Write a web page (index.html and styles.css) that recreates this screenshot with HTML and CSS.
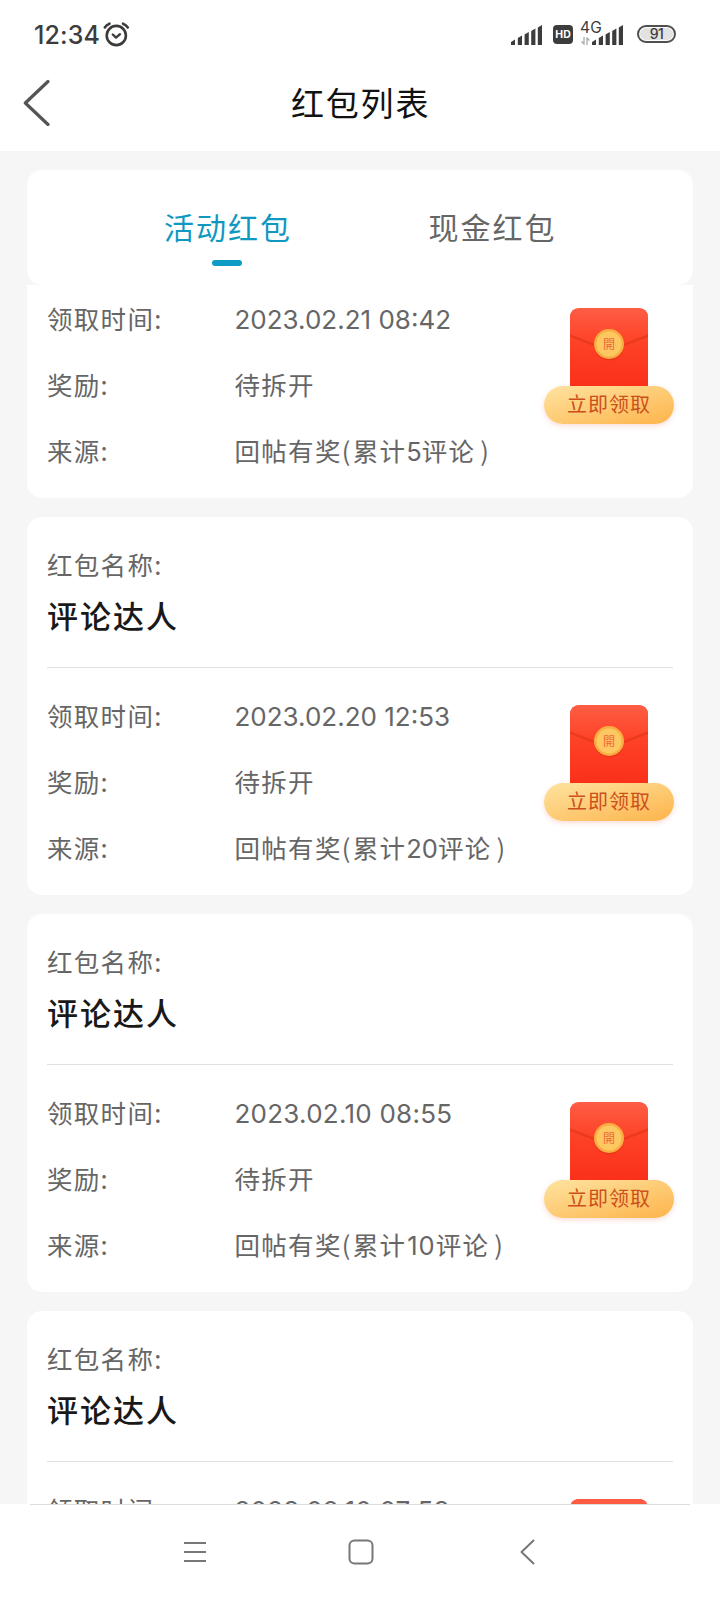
FILE: index.html
```html
<!DOCTYPE html>
<html lang="zh-CN">
<head>
<meta charset="utf-8">
<title>红包列表</title>
<link rel="stylesheet" href="styles.css">
</head>
<body>
<svg width="0" height="0" class="defs">
  <defs>
    <linearGradient id="red" x1="0" y1="0" x2="0" y2="1"><stop offset="0" stop-color="#ff6145"/><stop offset=".35" stop-color="#fe4529"/><stop offset="1" stop-color="#fb301a"/></linearGradient>
    <linearGradient id="flap" x1="0" y1="0" x2="0" y2="1"><stop offset="0" stop-color="#fd5d45"/><stop offset="1" stop-color="#fe4024"/></linearGradient>
    <symbol id="envelope" viewBox="0 0 78 78">
      <path d="M0 78V10Q0 0 10 0H68Q78 0 78 10V78Z" fill="url(#red)"/>
      <path d="M0 26L24 35.500Q39 40 54 35.500L78 26V29L54 38Q39 43 24 38L0 29Z" fill="#cf2c14" opacity=".4"/>
      <path d="M0 26V10Q0 0 10 0H68Q78 0 78 10V26L54 35.500Q39 40 24 35.500Z" fill="url(#flap)"/>
      <circle cx="39" cy="37.500" r="15" fill="#d42f12" opacity=".45"/>
      <circle cx="39" cy="36" r="15" fill="#f9ae43"/>
      <circle cx="39" cy="36" r="12.500" fill="#fdc862"/>
    </symbol>
    <symbol id="signal" viewBox="0 0 31 20">
      <path d="M0 20V17L4 14.500V20ZM6.800 20V13L11 10.500V20ZM13.600 20V9.500L17.800 7V20ZM20.200 20V6L24.400 3.500V20ZM26.800 20V2.500L31 0V20Z" fill="#3c3c3c"/>
    </symbol>
  </defs>
</svg>
<div class="phone">
  <div class="status">
    <span class="clock">12:34</span>
    <svg class="alarm" width="27" height="25" viewBox="0 0 27 25" fill="none" stroke="#3c3c3c" stroke-linecap="round"><circle cx="13.300" cy="13.500" r="9.600" stroke-width="2.600"/><path d="M1.800 5.500Q3.500 2.700 6.500 1.700M20 1.700Q23 2.700 24.800 5.500" stroke-width="2.600"/><path d="M9.800 12.500L13 15.600L17 12.200" stroke-width="2.400" stroke-linejoin="round"/></svg>
    <svg class="sim1" width="31" height="20"><use href="#signal"/></svg>
    <span class="hd">HD</span>
    <div class="sim2">
      <span class="net">4G</span>
      <svg class="arrows" width="9" height="8" viewBox="0 0 9 8" fill="none" stroke="#aaa" stroke-width="1.300"><path d="M3 0V7L.5 4.500M6 8V1L8.500 3.500"/></svg>
      <svg class="bars" width="31" height="20"><use href="#signal"/></svg>
    </div>
    <span class="battery">91</span>
  </div>
  <header class="header">
    <svg class="back" width="28" height="48" viewBox="0 0 28 48" fill="none" stroke="#555" stroke-width="3.200" stroke-linecap="round" stroke-linejoin="round"><path d="M25 3.500L2.300 25L25 46.500"/></svg>
    <h1 class="title">红包列表</h1>
  </header>
  <nav class="tabs">
    <div class="tab active">活动红包</div>
    <div class="tab">现金红包</div>
  </nav>
  <main class="list">
    <section class="card card-first">
      <div class="details">
        <div class="rows">
          <div class="row"><span class="label">领取时间:</span><span class="num">2023.02.21 08:42</span></div>
          <div class="row"><span class="label">奖励:</span><span>待拆开</span></div>
          <div class="row"><span class="label">来源:</span><span>回帖有奖<i class="lp">(</i>累计<i class="n">5</i>评论<i class="rp">)</i></span></div>
        </div>
        <div class="claim"><div class="packet"><svg width="78" height="78"><use href="#envelope"/></svg><span class="seal">開</span></div><span class="btn">立即领取</span></div>
      </div>
    </section>
    <section class="card">
      <div class="name">红包名称:</div>
      <h2 class="heading">评论达人</h2>
      <div class="details ruled">
        <div class="rows">
          <div class="row"><span class="label">领取时间:</span><span class="num">2023.02.20 12:53</span></div>
          <div class="row"><span class="label">奖励:</span><span>待拆开</span></div>
          <div class="row"><span class="label">来源:</span><span>回帖有奖<i class="lp">(</i>累计<i class="n">20</i>评论<i class="rp">)</i></span></div>
        </div>
        <div class="claim"><div class="packet"><svg width="78" height="78"><use href="#envelope"/></svg><span class="seal">開</span></div><span class="btn">立即领取</span></div>
      </div>
    </section>
    <section class="card">
      <div class="name">红包名称:</div>
      <h2 class="heading">评论达人</h2>
      <div class="details ruled">
        <div class="rows">
          <div class="row"><span class="label">领取时间:</span><span class="num wide">2023.02.10 08:55</span></div>
          <div class="row"><span class="label">奖励:</span><span>待拆开</span></div>
          <div class="row"><span class="label">来源:</span><span>回帖有奖<i class="lp">(</i>累计<i class="n wide">10</i>评论<i class="rp">)</i></span></div>
        </div>
        <div class="claim"><div class="packet"><svg width="78" height="78"><use href="#envelope"/></svg><span class="seal">開</span></div><span class="btn">立即领取</span></div>
      </div>
    </section>
    <section class="card">
      <div class="name">红包名称:</div>
      <h2 class="heading">评论达人</h2>
      <div class="details ruled">
        <div class="rows">
          <div class="row"><span class="label">领取时间:</span><span class="num wide">2023.02.10 07:53</span></div>
        </div>
        <div class="claim"><div class="packet"><svg width="78" height="78"><use href="#envelope"/></svg></div></div>
      </div>
    </section>
  </main>
  <footer class="navbar">
    <svg width="24" height="24" viewBox="0 0 24 24" fill="none" stroke="#777" stroke-width="2"><path d="M1 3H23M1 12H23M1 21H23"/></svg>
    <svg class="home" width="26" height="26" viewBox="0 0 26 26" fill="none" stroke="#777" stroke-width="2"><rect x="1.500" y="1.500" width="23" height="23" rx="5"/></svg>
    <svg width="24" height="26" viewBox="0 0 24 26" fill="none" stroke="#777" stroke-width="2" stroke-linecap="round" stroke-linejoin="round"><path d="M17.500 1.500L5.500 13L17.500 24.500"/></svg>
  </footer>
</div>
</body>
</html>
```
FILE: styles.css
```css
* { box-sizing: border-box; }
body { margin: 0; background: #fff; font-family: "Noto Sans CJK SC", sans-serif; color: #666; }
h1, h2 { margin: 0; }
i { font-style: normal; }
svg { display: block; flex: none; }
.defs { position: absolute; }
.phone { width: 720px; height: 1600px; overflow: hidden; background: #f6f6f6; display: flex; flex-direction: column; }

.status { height: 70px; flex: none; background: #fff; display: flex; align-items: flex-start; padding-left: 34px; color: #3c3c3c; font-family: Inter, sans-serif; }
.clock { width: 69px; margin-top: 20px; font-size: 25px; line-height: 30px; font-weight: 500; letter-spacing: .1px; white-space: nowrap; }
.alarm { margin-top: 22px; }
.sim1 { margin: 25px 0 0 381px; }
.hd { width: 20px; height: 19px; margin: 25px 0 0 11px; border-radius: 4px; background: #3c3c3c; color: #fff; font-size: 10.5px; line-height: 19px; font-weight: 700; text-align: center; }
.sim2 { width: 43px; height: 24px; margin: 21px 0 0 7px; display: grid; grid-template-columns: 12px 31px; position: relative; }
.net { position: absolute; left: 0; top: 0; font-size: 15.5px; line-height: 14px; letter-spacing: .2px; }
.arrows { margin: 16px 0 0 1px; }
.bars { margin-top: 4px; }
.battery { width: 39px; height: 18px; margin: 25px 0 0 14px; border: 2px solid #505050; border-radius: 9px; background: #e2e2e2; box-shadow: inset 0 0 0 1px #fff; font-size: 14px; line-height: 14px; text-align: center; font-weight: 500; letter-spacing: -.5px; }

.header { height: 81px; flex: none; background: #fff; display: flex; align-items: flex-start; padding-left: 23px; }
.back { margin-top: 8px; }
.title { margin: 8px 0 0 240px; font-size: 33px; line-height: 48px; font-weight: 400; letter-spacing: 1.8px; color: #111; white-space: nowrap; }

.tabs { height: 115px; flex: none; margin: 19px 27px 0; border-radius: 15px; background: #fff; display: flex; padding-left: 137px; }
.tab { width: 266px; padding-top: 35px; font-size: 30px; line-height: 42px; letter-spacing: 2px; display: flex; flex-direction: column; }
.active { color: #1098c0; }
.active::after { content: ""; width: 30px; height: 6px; margin: 13px 0 0 48px; border-radius: 3px; background: #0e9cc4; }

.list { flex: 1; min-height: 0; overflow: hidden; padding: 0 27px; display: flex; flex-direction: column; gap: 19px; font-size: 25.5px; letter-spacing: 1.3px; white-space: nowrap; }
.card { height: 378px; flex: none; background: #fff; border-radius: 15px; padding: 30px 20px 0; }
.card-first { height: 213px; border-radius: 0 0 15px 15px; padding-top: 2px; }
.name { line-height: 33px; }
.heading { font-size: 31px; line-height: 69px; font-weight: 500; letter-spacing: 2px; color: #191919; margin-bottom: 18px; }
.details { display: flex; justify-content: space-between; }
.ruled { border-top: 1px solid #e0e0e0; padding-top: 16px; }
.row { height: 66px; line-height: 62px; display: flex; }
.label { width: 187.5px; flex: none; }
.num { font-family: Inter, sans-serif; font-size: 26px; line-height: 66px; letter-spacing: 0; }
.num.wide { letter-spacing: .25px; }
.n { font-family: Inter, sans-serif; letter-spacing: 0; }
.n.wide { letter-spacing: 1px; margin: 0 0 0 1px; }
.lp { margin-right: 1px; }
.rp { margin-left: 5px; }
.claim { width: 130px; margin: 21px -1px 0 0; display: flex; flex-direction: column; align-items: center; }
.packet { width: 78px; height: 78px; position: relative; }
.seal { position: absolute; left: 0; top: 27px; width: 78px; font-size: 12px; line-height: 18px; letter-spacing: 0; text-align: center; color: #ef6a32; }
.btn { width: 130px; height: 38px; border-radius: 19px; background: linear-gradient(165deg, #fee3a0, #fdb44b); box-shadow: 0 2px 5px rgba(240,120,90,.25); color: #cc4f1c; font-size: 20px; line-height: 36px; letter-spacing: 1px; text-align: center; }

.navbar { height: 96px; flex: none; background: linear-gradient(#ddd, #ddd) 50% 0 / 660px 1px no-repeat #fff; display: flex; justify-content: space-between; align-items: center; padding: 0 180px 0 183px; }
.home { margin-left: -2px; }
```
